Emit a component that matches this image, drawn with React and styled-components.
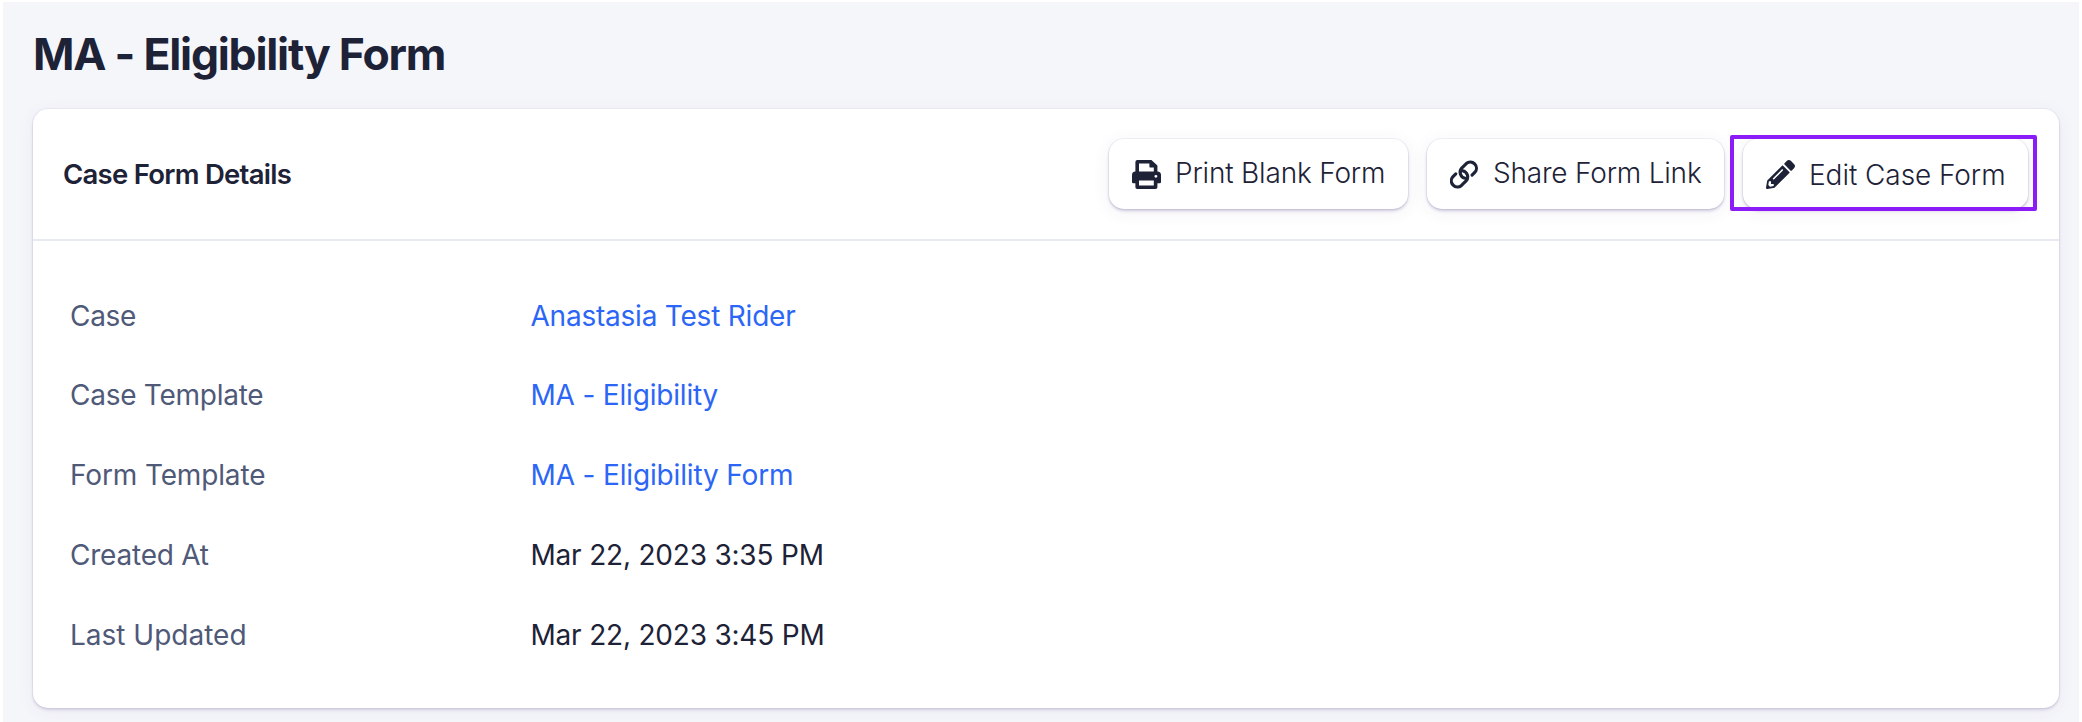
import React from "react";
import styled, { createGlobalStyle } from "styled-components";
import { FaPencilAlt } from "react-icons/fa";

const GlobalStyle = createGlobalStyle`
  * { box-sizing: border-box; }
  body {
    margin: 0;
    background: #fff;
    color: #1d2237;
    font-family: Inter, "Liberation Sans", sans-serif;
  }
`;

const Page = styled.main`
  height: 722px;
  overflow: hidden;
  background: #f5f6fa;
  border: 3px solid #fff;
  border-top-width: 2px;
  border-bottom: 0;
  padding: 22px 20.5px 0 30px;
`;

const PageTitle = styled.h1`
  margin: 0 0 24px;
  font-size: 44.5px;
  line-height: 61px;
  font-weight: 650;
  letter-spacing: -1.23px;
`;

const Card = styled.section`
  height: 599px;
  background: #fff;
  border-radius: 15px;
  box-shadow: 0 0 0 1px rgba(60, 50, 130, 0.05), 0 2px 3px rgba(60, 45, 120, 0.16),
    0 3px 18px rgba(60, 45, 120, 0.06);
`;

const CardHeader = styled.header`
  display: flex;
  align-items: center;
  justify-content: space-between;
  height: 132px;
  padding: 0 30.5px 0 30px;
  border-bottom: 2px solid #e8eaf3;
`;

const CardTitle = styled.h2`
  margin: 0;
  font-size: 27.5px;
  line-height: 36px;
  font-weight: 600;
  letter-spacing: -0.73px;
`;

const Actions = styled.div`
  display: flex;
  gap: 19px;
`;

const ActionButton = styled.button`
  position: relative;
  display: flex;
  align-items: center;
  gap: 14px;
  width: ${(p) => p.$width}px;
  height: 70px;
  padding: 0 0 0 23px;
  border: 0;
  border-radius: 15px;
  background: #fff;
  color: #1d2237;
  font-family: inherit;
  font-size: 28px;
  font-weight: 300;
  line-height: 36px;
  letter-spacing: ${(p) => p.$tracking}px;
  white-space: nowrap;
  box-shadow: 0 0 0 1px rgba(60, 50, 130, 0.06), 0 2px 3px rgba(60, 45, 120, 0.22),
    0 3px 18px rgba(60, 45, 120, 0.07);

  svg {
    flex: none;
    width: 29px;
    height: 29px;
  }
`;

const ButtonLabel = styled.span`
  padding-top: ${(p) => p.$drop || 0}px;
  padding-bottom: ${(p) => p.$lift || 0}px;
`;

const Highlight = styled.span`
  position: absolute;
  inset: -4px -9px -2px -13px;
  border: 4px solid #8b1cf7;
  border-radius: 2px;
  pointer-events: none;
`;

const Details = styled.dl`
  margin: 0;
  padding: 34.6px 37px 0;
  font-size: 28px;
  line-height: 36px;
`;

const DetailRow = styled.div`
  display: grid;
  grid-template-columns: 460.5px 1fr;
  align-items: center;
  height: 79.85px;
`;

const Term = styled.dt`
  color: #4f5978;
  letter-spacing: ${(p) => p.$tracking}px;
`;

const Value = styled.dd`
  margin: 0;
  letter-spacing: ${(p) => p.$tracking}px;
`;

const ValueLink = styled.a`
  color: #2c66f6;
  text-decoration: none;
`;

function PrinterIcon() {
  return (
    <svg viewBox="0 0 29 29" fill="currentColor" fillRule="evenodd">
      <path d="M3.4 12V2A2 2 0 0 1 5.4 0H19.4L25.4 5.6V12ZM7 12.6H21.8V7.6H18.6A1.2 1.2 0 0 1 17.4 6.4V3.6H7Z" />
      <path d="M3.4 11.6H25.4A3.6 3.6 0 0 1 29 15.2V22A1.2 1.2 0 0 1 27.8 23.2H25.4V27.2A1.8 1.8 0 0 1 23.6 29H5.2A1.8 1.8 0 0 1 3.4 27.2V23.2H1.2A1.2 1.2 0 0 1 0 22V15.2A3.6 3.6 0 0 1 3.4 11.6ZM7 20.6V25.4H21.8V20.6ZM23.9 14.9A1.45 1.45 0 1 0 23.9 17.8A1.45 1.45 0 1 0 23.9 14.9Z" />
    </svg>
  );
}

function ChainIcon() {
  return (
    <svg
      viewBox="0.6 0 28.7 28.7"
      fill="none"
      stroke="currentColor"
      strokeWidth="3.1"
      strokeLinecap="round"
    >
      <path d="M6.3 13.7L3.4 16.6A6.1 6.1 0 0 0 12 25.2L16.5 20.7A6.1 6.1 0 0 0 13 10.6" />
      <path d="M22.4 15L25.3 12.1A6.1 6.1 0 0 0 16.7 3.5L12.2 8A6.1 6.1 0 0 0 15.7 18.1" />
    </svg>
  );
}

const rows = [
  { term: "Case", termTracking: -0.3, value: "Anastasia Test Rider", tracking: -0.22, link: true },
  { term: "Case Template", termTracking: -0.26, value: "MA - Eligibility", tracking: -0.18, link: true },
  { term: "Form Template", termTracking: -0.14, value: "MA - Eligibility Form", tracking: -0.15, link: true },
  { term: "Created At", termTracking: -0.22, value: "Mar 22, 2023 3:35 PM", tracking: -0.2 },
  { term: "Last Updated", termTracking: 0, value: "Mar 22, 2023 3:45 PM", tracking: -0.2 },
];

export default function App() {
  return (
    <Page>
      <GlobalStyle />
      <PageTitle>MA - Eligibility Form</PageTitle>
      <Card>
        <CardHeader>
          <CardTitle>Case Form Details</CardTitle>
          <Actions>
            <ActionButton $width={299} $tracking={-0.18}>
              <PrinterIcon />
              <ButtonLabel $lift={3}>Print Blank Form</ButtonLabel>
            </ActionButton>
            <ActionButton $width={297} $tracking={-0.2}>
              <ChainIcon />
              <ButtonLabel $lift={3}>Share Form Link</ButtonLabel>
            </ActionButton>
            <ActionButton $width={285} $tracking={-0.06}>
              <FaPencilAlt />
              <ButtonLabel $drop={1}>Edit Case Form</ButtonLabel>
              <Highlight />
            </ActionButton>
          </Actions>
        </CardHeader>
        <Details>
          {rows.map((row) => (
            <DetailRow key={row.term}>
              <Term $tracking={row.termTracking}>{row.term}</Term>
              <Value $tracking={row.tracking}>
                {row.link ? <ValueLink href="#">{row.value}</ValueLink> : row.value}
              </Value>
            </DetailRow>
          ))}
        </Details>
      </Card>
    </Page>
  );
}
